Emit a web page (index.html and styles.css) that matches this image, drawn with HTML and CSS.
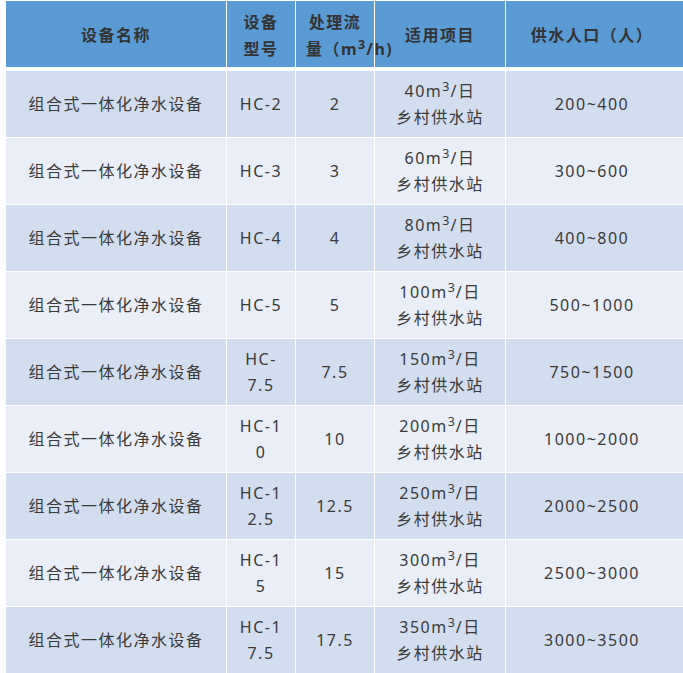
FILE: index.html
```html
<!DOCTYPE html>
<html lang="zh-CN">
<head>
<meta charset="utf-8">
<title>组合式一体化净水设备</title>
<link rel="stylesheet" href="styles.css">
</head>
<body>
<table class="spec">
  <colgroup>
    <col class="c-name">
    <col class="c-model">
    <col class="c-flow">
    <col class="c-use">
    <col class="c-pop">
  </colgroup>
  <thead>
    <tr>
      <th>设备名称</th>
      <th>设备<br>型号</th>
      <th class="flow"><span class="l1">处理流</span><span class="l2">量（m<sup>3</sup>/h)</span></th>
      <th>适用项目</th>
      <th class="pop">供水人口（人）</th>
    </tr>
  </thead>
  <tbody>
    <tr class="odd"><td>组合式一体化净水设备</td><td>HC-2</td><td>2</td><td>40m<sup>3</sup>/日<br>乡村供水站</td><td class="pop">200~400</td></tr>
    <tr class="even"><td>组合式一体化净水设备</td><td>HC-3</td><td>3</td><td>60m<sup>3</sup>/日<br>乡村供水站</td><td class="pop">300~600</td></tr>
    <tr class="odd"><td>组合式一体化净水设备</td><td>HC-4</td><td>4</td><td>80m<sup>3</sup>/日<br>乡村供水站</td><td class="pop">400~800</td></tr>
    <tr class="even"><td>组合式一体化净水设备</td><td>HC-5</td><td>5</td><td>100m<sup>3</sup>/日<br>乡村供水站</td><td class="pop">500~1000</td></tr>
    <tr class="odd"><td>组合式一体化净水设备</td><td>HC-<br>7.5</td><td>7.5</td><td>150m<sup>3</sup>/日<br>乡村供水站</td><td class="pop">750~1500</td></tr>
    <tr class="even"><td>组合式一体化净水设备</td><td>HC-1<br>0</td><td>10</td><td>200m<sup>3</sup>/日<br>乡村供水站</td><td class="pop">1000~2000</td></tr>
    <tr class="odd"><td>组合式一体化净水设备</td><td>HC-1<br>2.5</td><td>12.5</td><td>250m<sup>3</sup>/日<br>乡村供水站</td><td class="pop">2000~2500</td></tr>
    <tr class="even"><td>组合式一体化净水设备</td><td>HC-1<br>5</td><td>15</td><td>300m<sup>3</sup>/日<br>乡村供水站</td><td class="pop">2500~3000</td></tr>
    <tr class="odd last"><td>组合式一体化净水设备</td><td>HC-1<br>7.5</td><td>17.5</td><td>350m<sup>3</sup>/日<br>乡村供水站</td><td class="pop">3000~3500</td></tr>
  </tbody>
</table>
</body>
</html>
```

FILE: styles.css
```css
html {
  overflow: hidden;
}

body {
  margin: 0;
  background: #ffffff;
  font-family: "Noto Sans", "Noto Sans CJK SC", sans-serif;
  font-size: 16px;
  letter-spacing: 1.5px;
}

.spec {
  margin: 1px 0 0 6px;
  width: 677px;
  table-layout: fixed;
  border-collapse: separate;
  border-spacing: 0;
}

.c-name { width: 221px; }
.c-model { width: 69px; }
.c-flow { width: 79px; }
.c-use { width: 131px; }
.c-pop { width: 177px; }

.spec th,
.spec td {
  padding: 0 10px;
  text-align: center;
  vertical-align: middle;
  border-right: 1px solid #ffffff;
  border-bottom: 1px solid #ffffff;
  line-height: 26.5px;
  white-space: nowrap;
  overflow: visible;
}

.spec th:last-child,
.spec td:last-child {
  border-right: none;
}

.spec thead tr {
  height: 70px;
}

.spec th {
  background: #5b9bd5;
  color: #333333;
  font-weight: 700;
  border-bottom-width: 4px;
  padding-top: 3px;
}

.spec th.flow {
  text-align: left;
}

.spec th.flow .l1 {
  display: block;
  text-align: center;
}

.spec th.flow .l2 {
  display: block;
  text-align: left;
}

.spec .pop {
  padding-left: 10px;
  padding-right: 15px;
}

.spec tbody tr {
  height: 67px;
}

.spec tbody tr.last {
  height: 66px;
}

.spec tbody tr.last td {
  border-bottom: none;
}

.spec td {
  color: #3a3a3a;
}

.spec tr.odd td {
  background: #d2deef;
}

.spec tr.even td {
  background: #eaeff7;
}

.spec sup {
  font-size: 0.78em;
  line-height: 0;
  vertical-align: 0.5em;
  letter-spacing: 1px;
}
```
